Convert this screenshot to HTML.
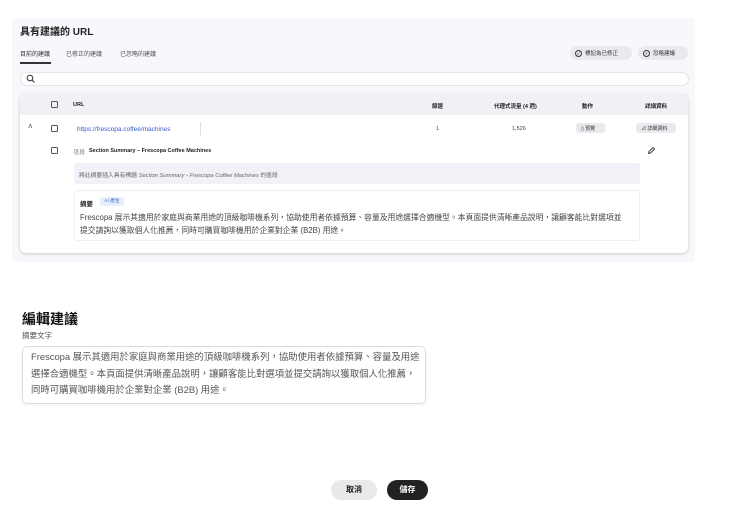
<!DOCTYPE html>
<html><head><meta charset="utf-8"><style>
*{box-sizing:border-box;margin:0;padding:0}
body{width:750px;height:526px;background:#fff;font-family:"Liberation Sans","Noto Sans CJK TC",sans-serif;color:#222;position:relative;overflow:hidden}
.a{position:absolute;white-space:nowrap}
.cb{position:absolute;width:7px;height:7px;border:1px solid #555;border-radius:1.5px}
.pill{position:absolute;background:#e9eaee;border-radius:8px;font-size:5.5px;color:#333;display:flex;align-items:center;gap:3px;padding-left:5px}
.ic{width:7px;height:7px;border:1px solid #333;border-radius:50%;font-size:4.5px;line-height:5px;text-align:center}
</style></head><body>
<div class="a" style="left:12px;top:18px;width:683px;height:244px;background:#f7f8fb"></div>
<div class="a" style="left:20px;top:23px;font-size:10px;font-weight:bold;color:#222">具有建議的 URL</div>
<div class="a" style="left:20px;top:49px;font-size:6px;color:#333">目前的建議</div>
<div class="a" style="left:20px;top:62px;width:31px;height:1.5px;background:#333"></div>
<div class="a" style="left:66px;top:49px;font-size:6px;color:#555">已修正的建議</div>
<div class="a" style="left:120px;top:49px;font-size:6px;color:#555">已忽略的建議</div>
<div class="pill" style="left:570px;top:46px;width:62px;height:14px"><span class="ic">✓</span>標記為已修正</div>
<div class="pill" style="left:638px;top:46px;width:50px;height:14px"><span class="ic">×</span>忽略建議</div>
<div class="a" style="left:20px;top:72px;width:669px;height:14px;background:#fff;border:1px solid #e2e4e8;border-radius:7px"></div>
<svg class="a" style="left:26px;top:74px" width="10" height="10" viewBox="0 0 10 10"><circle cx="4" cy="4" r="2.8" fill="none" stroke="#333" stroke-width="1"/><path d="M6 6L8.5 8.5" stroke="#333" stroke-width="1.1"/></svg>
<div class="a" style="left:20px;top:94px;width:668px;height:159px;background:#fff;border-radius:6px;box-shadow:0 1px 3px rgba(0,0,0,.18)"></div>
<div class="a" style="left:20px;top:94px;width:668px;height:21px;background:#f0f1f4;border-radius:6px 6px 0 0"></div>
<div class="cb" style="left:51px;top:101px"></div>
<div class="a" style="left:73px;top:102px;font-size:5.5px;font-weight:bold">URL</div>
<div class="a" style="left:432px;top:102px;font-size:5.5px;font-weight:bold">篩選</div>
<div class="a" style="left:494px;top:102px;font-size:5.5px;font-weight:bold">代理式流量 (4 週)</div>
<div class="a" style="left:582px;top:102px;font-size:5.5px;font-weight:bold">動作</div>
<div class="a" style="left:645px;top:102px;font-size:5.5px;font-weight:bold">詳細資料</div>
<div class="a" style="left:28px;top:122px;font-size:8px;color:#444">˄</div>
<div class="cb" style="left:51px;top:125px"></div>
<div class="a" style="left:77px;top:126px;font-size:6.5px;color:#3b5bcc">https://frescopa.coffee/machines</div>
<div class="a" style="left:200px;top:122px;width:1px;height:14px;background:#ddd"></div>
<div class="a" style="left:436px;top:126px;font-size:5.5px;color:#444">1</div>
<div class="a" style="left:512px;top:126px;font-size:5.5px;color:#444">1,526</div>
<div class="pill" style="left:576px;top:123px;width:29px;height:10px;border-radius:3px;font-size:5px">▯ 預覽</div>
<div class="pill" style="left:636px;top:123px;width:40px;height:10px;border-radius:3px;font-size:5px">⊿ 詳細資料</div>
<div class="cb" style="left:51px;top:147px"></div>
<div class="a" style="left:74px;top:148px;font-size:5.5px;color:#777">區段</div>
<div class="a" style="left:89px;top:148px;font-size:5.5px;font-weight:bold">Section Summary – Frescopa Coffee Machines</div>
<svg class="a" style="left:647px;top:146px" width="9" height="9" viewBox="0 0 9 9"><path d="M1.5 7.5L2 5.5L6 1.5L7.5 3L3.5 7Z" fill="none" stroke="#444" stroke-width="1"/></svg>
<div class="a" style="left:74px;top:163px;width:566px;height:21px;background:#f1f2f7;border-radius:3px"></div>
<div class="a" style="left:79px;top:170px;font-size:5.8px;color:#666">將此摘要插入具有標題 <i>Section Summary - Frescopa Coffee Machines</i> 的區段</div>
<div class="a" style="left:74px;top:190px;width:566px;height:51px;border:1px solid #eceef2;border-radius:3px"></div>
<div class="a" style="left:80px;top:198px;font-size:6.5px;font-weight:bold">摘要</div>
<div class="a" style="left:100px;top:197px;width:24px;height:9px;background:#e6edfb;border-radius:2px;font-size:4.8px;color:#3b5bcc;text-align:center;line-height:9px">AI 產生</div>
<div class="a" style="left:80px;top:211px;font-size:7.8px;color:#444;line-height:13px">Frescopa 展示其適用於家庭與商業用途的頂級咖啡機系列，協助使用者依據預算、容量及用途選擇合適機型。本頁面提供清晰產品說明，讓顧客能比對選項並<br>提交請詢以獲取個人化推薦，同時可購買咖啡機用於企業對企業 (B2B) 用途。</div>
<div class="a" style="left:22px;top:309px;font-size:14px;font-weight:bold;color:#111">編輯建議</div>
<div class="a" style="left:22px;top:330px;font-size:7.5px;color:#555">摘要文字</div>
<div class="a" style="left:22px;top:346px;width:404px;height:58px;border:1px solid #ddd;border-radius:5px;box-shadow:0 1px 2px rgba(0,0,0,.06)"></div>
<div class="a" style="left:31px;top:349px;font-size:9.4px;color:#555;line-height:16.5px">Frescopa 展示其適用於家庭與商業用途的頂級咖啡機系列，協助使用者依據預算、容量及用途<br>選擇合適機型。本頁面提供清晰產品說明，讓顧客能比對選項並提交請詢以獲取個人化推薦，<br>同時可購買咖啡機用於企業對企業 (B2B) 用途。</div>
<div class="a" style="left:331px;top:480px;width:46px;height:20px;background:#e9e9e9;border-radius:10px;font-size:8px;font-weight:bold;text-align:center;line-height:20px;color:#222">取消</div>
<div class="a" style="left:387px;top:480px;width:41px;height:20px;background:#222;border-radius:10px;font-size:8px;font-weight:bold;text-align:center;line-height:20px;color:#fff">儲存</div>
</body></html>
